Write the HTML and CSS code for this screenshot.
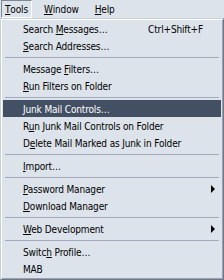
FILE: index.html
```html
<!DOCTYPE html>
<html>
<head>
<meta charset="utf-8">
<link rel="stylesheet" href="styles.css">
</head>
<body>
<div class="bar">
  <span class="top active"><u>T</u>ools</span>
  <span class="top"><u>W</u>indow</span>
  <span class="top"><u>H</u>elp</span>
</div>
<div class="menu">
  <div class="item"><span>Search <u>M</u>essages…</span><span class="key">Ctrl+Shift+F</span></div>
  <div class="item"><span><u>S</u>earch Addresses…</span></div>
  <div class="sep"></div>
  <div class="item"><span>Message <u>F</u>ilters…</span></div>
  <div class="item"><span><u>R</u>un Filters on Folder</span></div>
  <div class="sep"></div>
  <div class="item hl"><span><u>J</u>unk Mail Controls…</span></div>
  <div class="item"><span>R<u>u</u>n Junk Mail Controls on Folder</span></div>
  <div class="item"><span>D<u>e</u>lete Mail Marked as Junk in Folder</span></div>
  <div class="sep"></div>
  <div class="item"><span><u>I</u>mport…</span></div>
  <div class="sep"></div>
  <div class="item sub"><span><u>P</u>assword Manager</span></div>
  <div class="item"><span><u>D</u>ownload Manager</span></div>
  <div class="sep"></div>
  <div class="item sub"><span><u>W</u>eb Development</span></div>
  <div class="sep"></div>
  <div class="item"><span>Switc<u>h</u> Profile…</span></div>
  <div class="item"><span>MAB</span></div>
</div>
</body>
</html>
```
FILE: styles.css
```css
html, body {
  margin: 0;
  padding: 0;
  background: #dde3ea;
}
body {
  font-family: "DejaVu Sans Condensed", "DejaVu Sans", sans-serif;
  font-stretch: condensed;
  font-size: 10px;
  letter-spacing: -0.15px;
  color: #000;
  width: 224px;
  height: 280px;
  overflow: hidden;
}
.bar {
  height: 18px;
  display: flex;
  align-items: stretch;
  padding-left: 1px;
}
.top {
  display: flex;
  align-items: center;
  padding: 0 3px;
  margin-right: 8px;
  border: 1px solid transparent;
}
.top.active {
  border-color: #808890 #fff #fff #808890;
}
.menu {
  box-sizing: border-box;
  width: 224px;
  height: 262px;
  border: 1px solid;
  border-color: #c8d0d8 #70788a #70788a #c8d0d8;
  box-shadow: inset 1px 1px #fff, inset -1px -1px #98a0b0;
  padding: 1px 2px 2px;
}
.item {
  box-sizing: border-box;
  height: 17px;
  display: flex;
  align-items: center;
  padding: 1px 18px 0 20px;
  position: relative;
  white-space: nowrap;
}
.item .key {
  margin-left: auto;
}
.item.hl {
  background: #434f63;
  color: #fff;
}
.item.sub::after {
  content: "";
  position: absolute;
  right: 6px;
  top: 5px;
  border-left: 4px solid #000;
  border-top: 4px solid transparent;
  border-bottom: 4px solid transparent;
}
.sep {
  height: 6px;
  display: flex;
  align-items: center;
  padding: 0 2px;
}
.sep::before {
  content: "";
  flex: 1;
  height: 1px;
  background: #a4a8bc;
}
```
